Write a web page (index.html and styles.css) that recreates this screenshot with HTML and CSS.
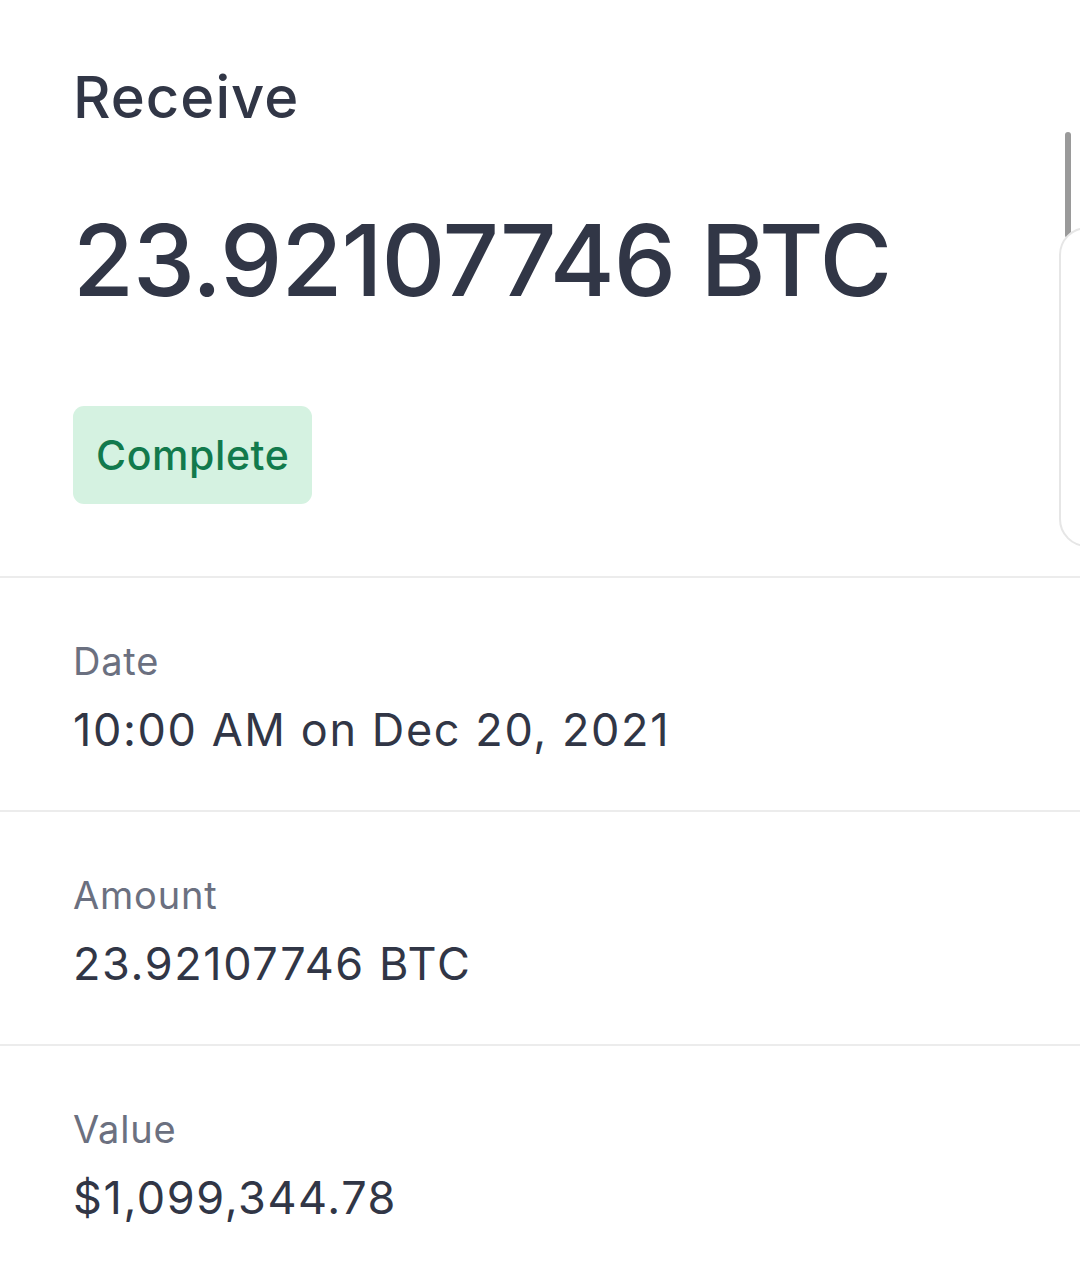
FILE: index.html
```html
<!DOCTYPE html>
<html lang="en">
<head>
  <meta charset="UTF-8" />
  <meta name="viewport" content="width=device-width, initial-scale=1.0" />
  <title>Transaction</title>
  <link rel="stylesheet" href="styles.css">
</head>
<body>
  <div class="scroll-thumb"></div>
  <div class="side-panel"></div>

  <div class="header">
    <h1 class="type">Receive</h1>
    <div class="amount">23.92107746 BTC</div>
    <span class="badge">Complete</span>
  </div>

  <div class="row">
    <div class="label">Date</div>
    <div class="value">10:00 AM on Dec 20, 2021</div>
  </div>
  <div class="row">
    <div class="label">Amount</div>
    <div class="value">23.92107746 BTC</div>
  </div>
  <div class="row last">
    <div class="label">Value</div>
    <div class="value">$1,099,344.78</div>
  </div>
</body>
</html>
```

FILE: styles.css
```css
body {
  margin: 0;
  font-family: Inter, "Noto Sans", sans-serif;
  background-color: #fff;
  color: #313646;
  overflow: hidden;
}
.header {
  padding: 62px 0 72px 73px;
  border-bottom: 2px solid #ececec;
}
.type {
  margin: 0;
  font-size: 58px;
  font-weight: 500;
  line-height: 70px;
  letter-spacing: 1px;
}
.amount {
  margin-top: 68px;
  font-size: 99px;
  font-weight: 500;
  line-height: 120px;
  letter-spacing: -1px;
}
.badge {
  display: inline-block;
  margin-top: 86px;
  padding: 0 23px;
  height: 98px;
  line-height: 98px;
  border-radius: 11px;
  background-color: #d5f2e1;
  color: #127a4c;
  font-size: 41px;
  font-weight: 500;
  letter-spacing: 0.6px;
}
.row {
  padding: 58px 0 54px 73px;
  border-bottom: 2px solid #ececec;
}
.row.last {
  border-bottom: none;
}
.label {
  font-size: 38px;
  color: #6b7080;
  line-height: 50px;
  letter-spacing: 0.8px;
}
.value {
  margin-top: 18px;
  font-size: 45px;
  line-height: 52px;
  letter-spacing: 1.6px;
}
.scroll-thumb {
  position: absolute;
  left: 1065px;
  top: 132px;
  width: 6px;
  height: 106px;
  border-radius: 3px;
  background-color: #9a9a9a;
}
.side-panel {
  position: absolute;
  left: 1059px;
  top: 227px;
  width: 80px;
  height: 316px;
  border: 2px solid #e6e6e6;
  border-radius: 28px;
  background-color: #fff;
}
```
